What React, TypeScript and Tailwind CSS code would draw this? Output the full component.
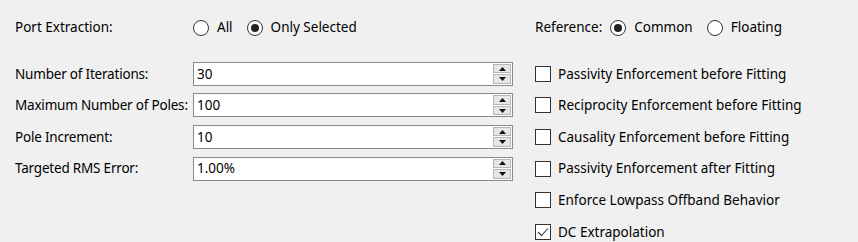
import React from "react";

const FONT = { fontFamily: '"Noto Sans", "Liberation Sans", sans-serif' };

function Radio({ checked, label }: { checked?: boolean; label: string }) {
  return (
    <div className="flex items-center">
      <span className="flex h-[16px] w-[16px] items-center justify-center rounded-full border border-[#333] bg-white">
        {checked && <span className="h-[8px] w-[8px] rounded-full bg-[#222]" />}
      </span>
      <span className="ml-[8px]">{label}</span>
    </div>
  );
}

function Spin({ value }: { value: string }) {
  return (
    <div className="flex h-[24px] w-[320px] items-stretch border border-[#8a8a8a] bg-white">
      <div className="flex flex-1 items-center pl-[3px]">{value}</div>
      <div className="my-[1px] mr-[1px] flex w-[18px] flex-col gap-[1px]">
        <div className="flex flex-1 items-center justify-center border border-[#b5b5b5] bg-[#e6e6e6]">
          <svg width="7" height="4" viewBox="0 0 7 4">
            <polygon points="0,4 7,4 3.5,0" fill="#111" />
          </svg>
        </div>
        <div className="flex flex-1 items-center justify-center border border-[#b5b5b5] bg-[#e6e6e6]">
          <svg width="7" height="4" viewBox="0 0 7 4">
            <polygon points="0,0 7,0 3.5,4" fill="#111" />
          </svg>
        </div>
      </div>
    </div>
  );
}

function Check({ checked, label }: { checked?: boolean; label: string }) {
  return (
    <div className="flex h-[31.6px] items-center">
      <span className="flex h-[16px] w-[16px] items-center justify-center border border-[#333] bg-white">
        {checked && (
          <svg width="12" height="10" viewBox="0 0 12 10">
            <polyline points="1,5 4.5,8.5 11,1.5" fill="none" stroke="#333" strokeWidth="1.1" />
          </svg>
        )}
      </span>
      <span className="ml-[7px]">{label}</span>
    </div>
  );
}

const fields = [
  { label: "Number of Iterations:", value: "30" },
  { label: "Maximum Number of Poles:", value: "100" },
  { label: "Pole Increment:", value: "10" },
  { label: "Targeted RMS Error:", value: "1.00%" },
];

const checks = [
  { label: "Passivity Enforcement before Fitting" },
  { label: "Reciprocity Enforcement before Fitting" },
  { label: "Causality Enforcement before Fitting" },
  { label: "Passivity Enforcement after Fitting" },
  { label: "Enforce Lowpass Offband Behavior" },
  { label: "DC Extrapolation", checked: true },
];

export default function App() {
  return (
    <div className="h-[242px] w-[858px] overflow-hidden bg-[#f0f0f0] pl-[15px] text-[13.5px] text-black" style={FONT}>
      {/* top row */}
      <div className="flex h-[55px] items-center">
        <div className="w-[178px]">Port Extraction:</div>
        <div className="flex w-[342px] items-center gap-[14px]">
          <Radio label="All" />
          <Radio checked label="Only Selected" />
        </div>
        <div className="flex items-center gap-[8px]">
          <span>Reference:</span>
          <div className="flex items-center gap-[14px]">
            <Radio checked label="Common" />
            <Radio label="Floating" />
          </div>
        </div>
      </div>

      <div className="mt-[3px] flex">
        {/* spin fields */}
        <div className="w-[520px]">
          {fields.map((f) => (
            <div key={f.label} className="flex h-[31.6px] items-center">
              <div className="w-[178px] whitespace-nowrap tracking-[-0.2px]">{f.label}</div>
              <Spin value={f.value} />
            </div>
          ))}
        </div>
        {/* options */}
        <div>
          {checks.map((c) => (
            <Check key={c.label} label={c.label} checked={c.checked} />
          ))}
        </div>
      </div>
    </div>
  );
}
